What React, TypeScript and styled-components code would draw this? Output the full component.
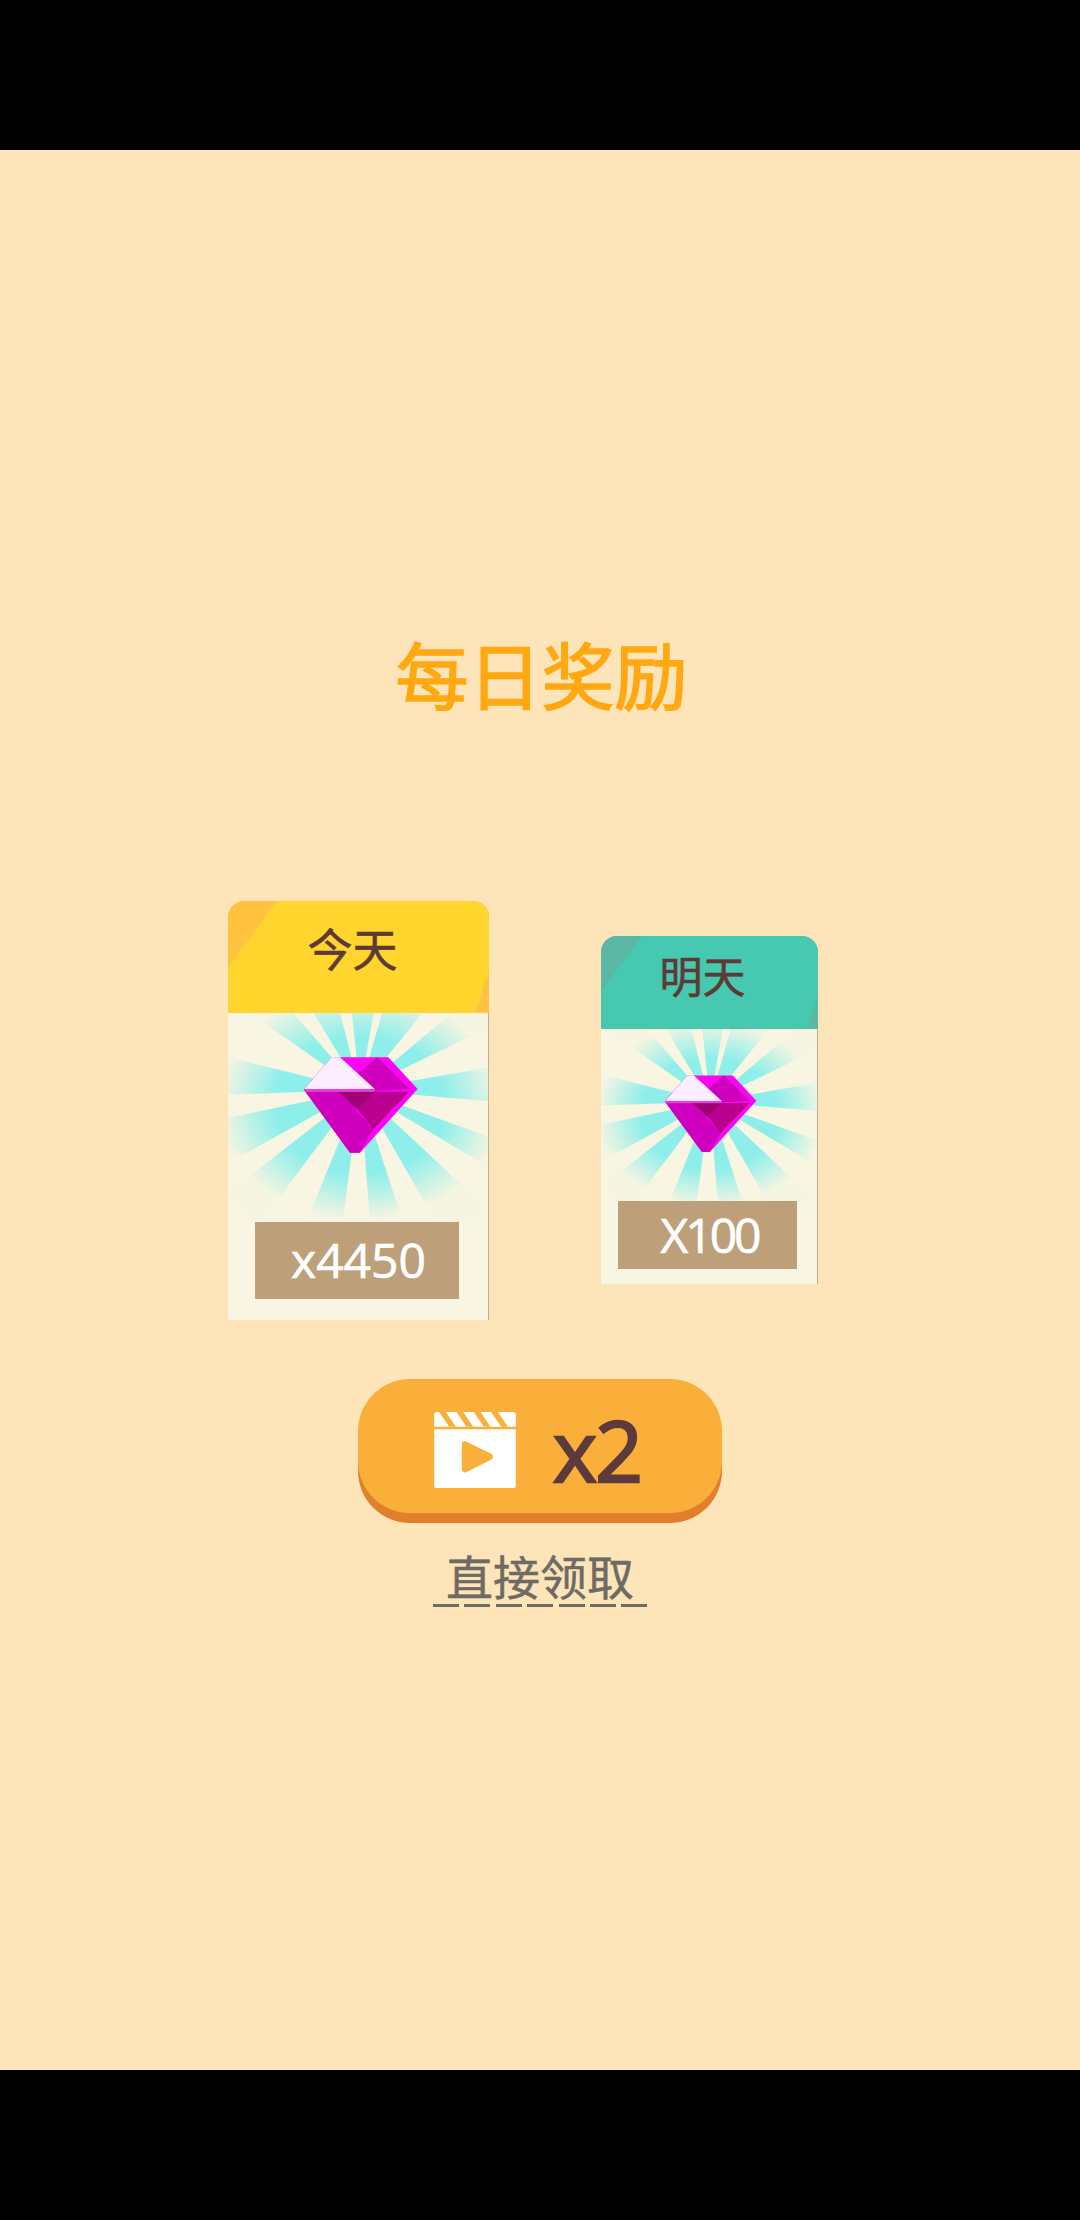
import React, { FC } from 'react'
import styled, { createGlobalStyle } from 'styled-components'

const GlobalStyle = createGlobalStyle`
  html, body {
    margin: 0;
    padding: 0;
    background: #000;
  }
  body {
    font-family: "Noto Sans CJK SC", "Open Sans", sans-serif;
  }
`

type Tone = 'today' | 'tomorrow'

const CARD_SIZES = {
  today: { width: 261, header: 112, font: 45, priceW: 204, priceH: 77, left: 27, bottom: 21, labelX: 12, labelY: 18, spacing: 0, pricePad: 3 },
  tomorrow: { width: 217, header: 93, font: 43, priceW: 179, priceH: 68, left: 17, bottom: 15, labelX: 14, labelY: 18, spacing: -3, pricePad: 4 },
}

const CARD_COLORS = {
  today: { head: '#ffd52e', corner: '#ffc340' },
  tomorrow: { head: '#47c8b0', corner: '#5ab8a5' },
}

const Screen = styled.div`
  width: 1080px;
  height: 2220px;
  padding: 150px 0;
  box-sizing: border-box;
  background: #000;
`

const Main = styled.main`
  height: 1920px;
  background: #fee5b9;
  display: flex;
  flex-direction: column;
  align-items: center;
  padding-top: 472px;
  box-sizing: border-box;
`

const Title = styled.h1`
  margin: 0 0 0 3px;
  font-size: 73px;
  line-height: 100px;
  font-weight: 400;
  color: #ffa812;
  -webkit-text-stroke: 1.6px #ffa812;
`

const CardRow = styled.div`
  align-self: flex-start;
  margin: 179px 0 0 228px;
  height: 418px;
  display: flex;
  align-items: center;
  gap: 112px;
`

const Card = styled.section<{ $tone: Tone }>`
  width: ${({ $tone }) => CARD_SIZES[$tone].width}px;
  background: #f8f5e2;
  border-radius: 16px 16px 0 0;
  overflow: hidden;
  box-shadow: inset -1px 0 0 #c0ad8c;
`

const CardHead = styled.header<{ $tone: Tone }>`
  position: relative;
  height: ${({ $tone }) => CARD_SIZES[$tone].header}px;
  background: ${({ $tone }) => CARD_COLORS[$tone].head};
  display: flex;
  align-items: center;
  justify-content: center;
  font-size: ${({ $tone }) => CARD_SIZES[$tone].font}px;
  font-weight: 400;
  -webkit-text-stroke: 0.6px #5d3a35;
  color: #5d3a35;

  &::before {
    content: '';
    position: absolute;
    left: 0;
    top: 0;
    width: ${({ $tone }) => ($tone === 'today' ? 50 : 41)}px;
    height: ${({ $tone }) => ($tone === 'today' ? 67 : 56)}px;
    background: ${({ $tone }) => CARD_COLORS[$tone].corner};
    clip-path: polygon(0 0, 100% 0, 0 100%);
  }

  &::after {
    content: '';
    position: absolute;
    right: 0;
    bottom: 0;
    width: ${({ $tone }) => ($tone === 'today' ? 14 : 11)}px;
    height: ${({ $tone }) => ($tone === 'today' ? 42 : 34)}px;
    background: ${({ $tone }) => CARD_COLORS[$tone].corner};
    clip-path: polygon(100% 0, 100% 100%, 0 100%);
  }
`

const HeadLabel = styled.span<{ $tone: Tone }>`
  position: relative;
  z-index: 1;
  margin: 0 ${({ $tone }) => CARD_SIZES[$tone].labelX}px ${({ $tone }) => CARD_SIZES[$tone].labelY}px 0;
`

const Art = styled.svg`
  display: block;
`

const Price = styled.div<{ $tone: Tone }>`
  width: ${({ $tone }) => CARD_SIZES[$tone].priceW}px;
  height: ${({ $tone }) => CARD_SIZES[$tone].priceH}px;
  margin: 0 0 ${({ $tone }) => CARD_SIZES[$tone].bottom}px ${({ $tone }) => CARD_SIZES[$tone].left}px;
  padding-left: ${({ $tone }) => CARD_SIZES[$tone].pricePad}px;
  box-sizing: border-box;
  background: #bda07a;
  color: #fff;
  display: flex;
  align-items: center;
  justify-content: center;
  font-family: "Open Sans", "Noto Sans", sans-serif;
  font-size: 48px;
  -webkit-text-stroke: 0.7px #fff;
  letter-spacing: ${({ $tone }) => CARD_SIZES[$tone].spacing}px;
  line-height: 1;
`

const ClaimButton = styled.button`
  margin-top: 60px;
  width: 364px;
  height: 134px;
  border: 0;
  border-radius: 52px;
  background: #f9af3a;
  box-shadow: 0 10px 0 #e0802c;
  display: flex;
  align-items: center;
  gap: 37px;
  padding: 8px 0 0 76px;
  box-sizing: border-box;
  font-family: "Open Sans", "Noto Sans", sans-serif;
  font-size: 84px;
  -webkit-text-stroke: 2.4px #5d3a3c;
  letter-spacing: -2px;
  line-height: 1;
  color: #5d3a3c;
`

const SkipLink = styled.a`
  margin-top: 31px;
  width: 215px;
  padding-bottom: 1px;
  font-size: 47px;
  line-height: 62px;
  text-align: center;
  color: #6d6c64;
  -webkit-text-stroke: 0.5px #6d6c64;
  background: repeating-linear-gradient(90deg, #6d6c64 0 26px, transparent 26px 31.4px) left bottom / 100% 3px no-repeat;
`

const RAYS: [number, number][] = [
  [329, 345.5], [354, 370], [376, 399], [410, 424], [440, 455], [470, 481],
  [493, 510], [522, 535.6], [547.5, 562], [577, 592], [601, 618], [628, 644],
  [665, 679],
]

const rayPath = ([from, to]: [number, number]) => {
  const r = 170
  const point = (deg: number) => {
    const rad = (deg * Math.PI) / 180
    return `${(Math.sin(rad) * r).toFixed(1)} ${(-Math.cos(rad) * r).toFixed(1)}`
  }
  return `M0 0L${point(from)}L${point(to)}Z`
}

type RewardArtProps = {
  id: string
  width: number
  height: number
  viewBox: string
}

const RewardArt: FC<RewardArtProps> = ({ id, width, height, viewBox }) => (
  <Art width={width} height={height} viewBox={viewBox}>
    <defs>
      {/* glow is wider than tall and sits a little below the ray centre */}
      <radialGradient
        id={id}
        gradientUnits="userSpaceOnUse"
        cx="0"
        cy="0"
        r="1"
        gradientTransform="translate(0 15) scale(142 116)"
      >
        <stop offset="0.6" stopColor="#8eefea" />
        <stop offset="1" stopColor="#8eefea" stopOpacity="0.02" />
      </radialGradient>
    </defs>
    {RAYS.map(ray => (
      <path key={ray[0]} d={rayPath(ray)} fill={`url(#${id})`} />
    ))}
    {/* diamond, points read off the reference at 3x */}
    <g transform="translate(-70 -50) scale(0.3333)">
      <polygon points="125,52 295,52 383,147 210,338 180,338 42,147" fill="#fb06f5" />
      <polygon points="42,150 145,152 250,268 208,338 180,338" fill="#cf00bd" />
      <polygon points="200,205 255,155 357,155 250,268" fill="#b9008f" />
      <polygon points="145,155 255,155 200,208" fill="#a00074" />
      <polygon points="262,52 358,147 255,152 205,100" fill="#cf00bd" />
      <polygon points="125,52 150,52 255,148 42,148" fill="#fdeeff" />
      <polygon points="42,148 255,148 252,156 46,156" fill="#e23fe0" />
    </g>
  </Art>
)

const VideoIcon: FC = () => (
  <svg width="82" height="76" viewBox="27 22 245 228" style={{ flexShrink: 0 }}>
    <path d="M35 22H264a8 8 0 0 1 8 8V66H27V30a8 8 0 0 1 8-8Z" fill="#fff" />
    <path d="M27 74H272V243a7 7 0 0 1-7 7H34a7 7 0 0 1-7-7Z" fill="#fff" />
    {[0, 52, 104, 156].map(x => (
      <path key={x} d={`M${42 + x} 22H${62 + x}L${92 + x} 66H${72 + x}Z`} fill="#f9af3a" />
    ))}
    <path d="M120 120L193 156L120 193Z" fill="#f9af3a" stroke="#f9af3a" strokeWidth="20" strokeLinejoin="round" />
  </svg>
)

const App: FC = () => (
  <Screen>
    <GlobalStyle />
    <Main>
      <Title>每日奖励</Title>
      <CardRow>
        <Card $tone="today">
          <CardHead $tone="today">
            <HeadLabel $tone="today">今天</HeadLabel>
          </CardHead>
          <RewardArt id="rays-today" width={261} height={209} viewBox="-132 -77 261 209" />
          <Price $tone="today">x4450</Price>
        </Card>
        <Card $tone="tomorrow">
          <CardHead $tone="tomorrow">
            <HeadLabel $tone="tomorrow">明天</HeadLabel>
          </CardHead>
          <RewardArt id="rays-tomorrow" width={217} height={172} viewBox="-135.4 -90.3 269.6 213.7" />
          <Price $tone="tomorrow">X100</Price>
        </Card>
      </CardRow>
      <ClaimButton>
        <VideoIcon />
        x2
      </ClaimButton>
      <SkipLink>直接领取</SkipLink>
    </Main>
  </Screen>
)

export default App
